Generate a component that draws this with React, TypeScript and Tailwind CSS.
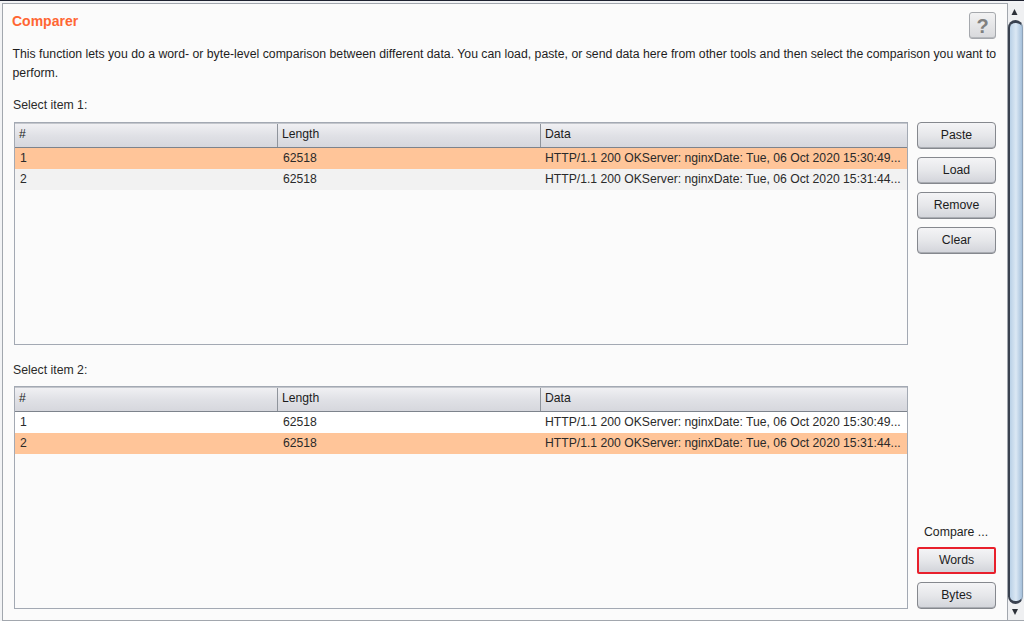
const rows = [
  { n: "1", len: "62518", data: "HTTP/1.1 200 OKServer: nginxDate: Tue, 06 Oct 2020 15:30:49..." },
  { n: "2", len: "62518", data: "HTTP/1.1 200 OKServer: nginxDate: Tue, 06 Oct 2020 15:31:44..." },
];

function ItemTable({ selected, striped }: { selected: number; striped?: boolean }) {
  return (
    <div className="w-[894px] h-[223px] border border-[#a3a9b3] bg-[#fbfbfb] flex flex-col text-[12.2px]">
      <div className="h-[25px] shrink-0 flex border-t border-t-[#c3c6cc] border-b border-b-[#7d838c] bg-gradient-to-b from-[#f0f0f3] via-[#e0e1e6] to-[#d6d7dd] text-[#1c1c1c]">
        <div className="w-[263px] pl-[4px] leading-[20px] border-r border-r-[#8f949c]">#</div>
        <div className="w-[263px] pl-[4px] leading-[20px] border-r border-r-[#8f949c]">Length</div>
        <div className="flex-1 pl-[4px] leading-[20px]">Data</div>
      </div>
      {rows.map((r, i) => (
        <div
          key={r.n}
          className={
            i === selected
              ? "h-[21px] shrink-0 flex leading-[21px] bg-[#ffc599] text-[#2a2a2a]"
              : striped
                ? "h-[21px] shrink-0 flex leading-[21px] bg-[#f2f2f2] text-[#2a2a2a]"
                : "h-[21px] shrink-0 flex leading-[21px] bg-white text-[#2a2a2a]"
          }
        >
          <div className="w-[263px] pl-[5px]">{r.n}</div>
          <div className="w-[263px] pl-[5px]">{r.len}</div>
          <div className="flex-1 pl-[4px] pr-[2px] whitespace-nowrap overflow-hidden">{r.data}</div>
        </div>
      ))}
    </div>
  );
}

function Btn({ label, outlined }: { label: string; outlined?: boolean }) {
  return (
    <button
      className={
        outlined
          ? "w-[79px] h-[27px] rounded-[2px] border-2 border-[#e8202c] bg-gradient-to-b from-[#f4f4f6] via-[#e6e7ea] to-[#d2d4da] text-[#1c1c1c]"
          : "w-[79px] h-[27px] rounded-[4px] border border-[#85888e] bg-gradient-to-b from-[#f4f4f6] via-[#e6e7ea] to-[#d2d4da] text-[#1c1c1c] shadow-[inset_0_-1px_0_#a9acb2]"
      }
    >
      {label}
    </button>
  );
}

export default function App() {
  return (
    <div className="w-[1024px] h-[621px] overflow-hidden flex flex-col bg-[#f2f3f5] text-[12.27px] font-['Liberation_Sans',Arial,sans-serif]">
      <div className="h-[1px] shrink-0 bg-[#1e2230]" />
      <div className="flex-1 flex min-h-0 pl-[2px]">
        <div className="w-[1006px] mt-[2px] h-[618px] border border-[#a2a7ae] bg-[#fbfbfb] flex flex-col pl-[9px] pr-[11px]">
          <div className="h-[35px] pt-[7px] shrink-0 flex justify-between">
            <div className="text-[14px] leading-[20px] font-bold text-[#ff6633]">Comparer</div>
            <button className="w-[27px] h-[27px] mt-[1px] rounded-[3px] border border-[#a5a8ad] bg-gradient-to-b from-[#f2f2f3] to-[#d8d9dc] text-[#808080] text-[20px] font-bold leading-[24px] shadow-[inset_0_-1px_0_#b5b8bc]">
              ?
            </button>
          </div>
          <p className="mt-[6px] ml-[0.5px] w-[988px] leading-[19px] text-[#1e1e1e]">
            This function lets you do a word- or byte-level comparison between different data. You can load, paste, or send data here from other tools and then select the comparison you want to perform.
          </p>
          <div className="mt-[13px] ml-[1px] h-[19px] leading-[19px] text-[#2a2a2a]">Select item 1:</div>
          <div className="mt-[7px] flex justify-between pl-[2px]">
            <ItemTable selected={0} striped />
            <div className="flex flex-col gap-[8px]">
              <Btn label="Paste" />
              <Btn label="Load" />
              <Btn label="Remove" />
              <Btn label="Clear" />
            </div>
          </div>
          <div className="mt-[16px] ml-[1px] h-[19px] leading-[19px] text-[#2a2a2a]">Select item 2:</div>
          <div className="mt-[6px] flex justify-between pl-[2px]">
            <ItemTable selected={1} />
            <div className="flex flex-col justify-end gap-[8px] h-[224px] pb-[1px]">
              <div className="leading-[14px] pl-[7px] whitespace-nowrap text-[#1e1e1e]">Compare ...</div>
              <Btn label="Words" outlined />
              <Btn label="Bytes" />
            </div>
          </div>
        </div>
        <div className="w-[16px] flex flex-col bg-[#eff0f2] mt-[2px] border-b border-b-[#a2a7ae]">
          <svg width="16" height="17" viewBox="0 0 16 17" className="shrink-0">
            <path d="M6.5 6 L3.5 12 H9.5 Z" fill="#2c3038" />
          </svg>
          <div className="flex-1 w-[15px] border-t-[3px] border-b-[3px] border-l-2 border-r border-[#39414f] border-r-[#8fa3b8] rounded-[9px] bg-gradient-to-r from-[#b9d0e6] via-[#dbe8f4] to-[#a5c0db]" />
          <svg width="16" height="16" viewBox="0 0 16 16" className="shrink-0">
            <path d="M7 11 L4 5 H10 Z" fill="#2c3038" />
          </svg>
        </div>
      </div>
    </div>
  );
}
